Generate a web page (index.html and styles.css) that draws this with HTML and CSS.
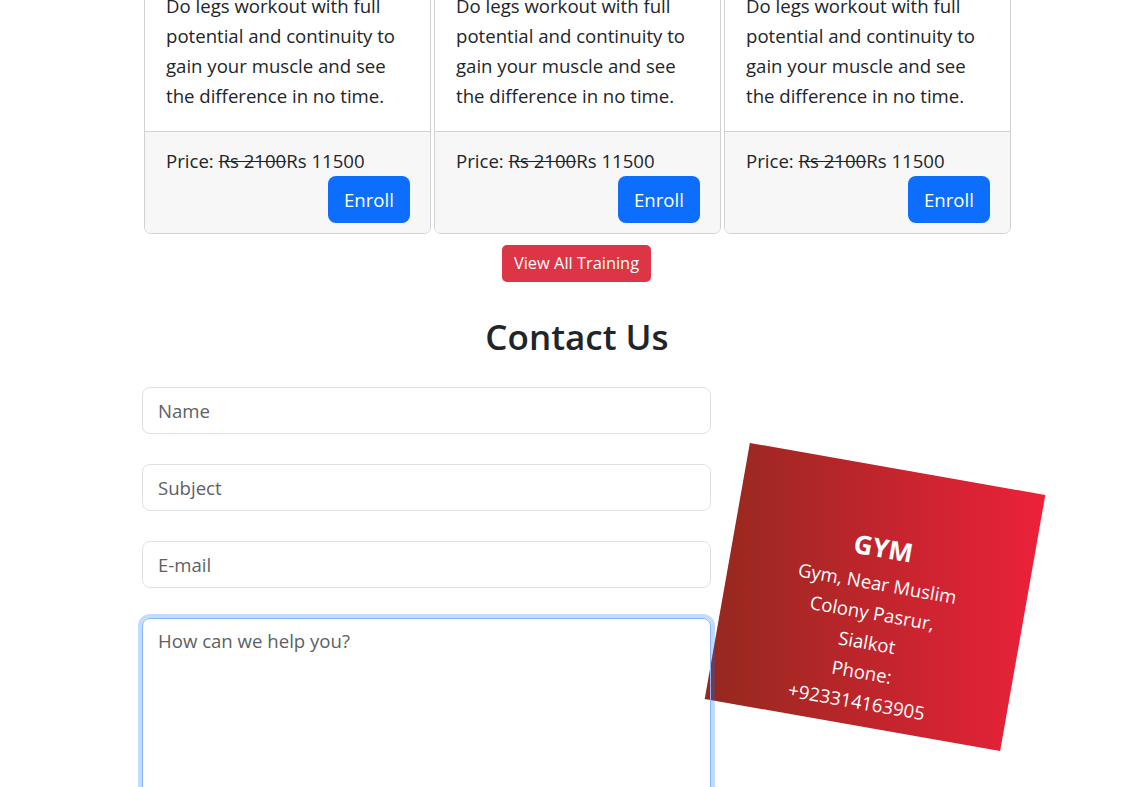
FILE: index.html
```html
<!DOCTYPE html>
<html lang="en">
<head>
<meta charset="utf-8">
<title>Gym</title>
<link rel="stylesheet" href="styles.css">
</head>
<body>
<main class="page">
  <section class="trainings">
    <div class="cards">
      <article class="card">
        <div class="card-body"><p>Do legs workout with full potential and continuity to gain your muscle and see the difference in no time.</p></div>
        <div class="card-footer">
          <div class="price">Price: <s>Rs 2100</s>Rs 11500</div>
          <div class="actions"><button class="btn-enroll">Enroll</button></div>
        </div>
      </article>
      <article class="card">
        <div class="card-body"><p>Do legs workout with full potential and continuity to gain your muscle and see the difference in no time.</p></div>
        <div class="card-footer">
          <div class="price">Price: <s>Rs 2100</s>Rs 11500</div>
          <div class="actions"><button class="btn-enroll">Enroll</button></div>
        </div>
      </article>
      <article class="card">
        <div class="card-body"><p>Do legs workout with full potential and continuity to gain your muscle and see the difference in no time.</p></div>
        <div class="card-footer">
          <div class="price">Price: <s>Rs 2100</s>Rs 11500</div>
          <div class="actions"><button class="btn-enroll">Enroll</button></div>
        </div>
      </article>
    </div>
    <div class="view-all"><button class="btn-red">View All Training</button></div>
  </section>

  <section class="contact">
    <h2 class="contact-title">Contact Us</h2>
    <div class="contact-row">
      <form class="contact-form">
        <input class="field" type="text" placeholder="Name">
        <input class="field" type="text" placeholder="Subject">
        <input class="field" type="email" placeholder="E-mail">
        <textarea class="field area focused" placeholder="How can we help you?"></textarea>
      </form>
      <div class="info-card">
        <h3 class="info-title">GYM</h3>
        <p class="info-text">Gym, Near Muslim Colony Pasrur, Sialkot<br>Phone: +923314163905</p>
      </div>
    </div>
  </section>
</main>
</body>
</html>
```

FILE: styles.css
```css
* { box-sizing: border-box; }
html, body { margin: 0; padding: 0; background: #fff; overflow: hidden; }
body {
  font-family: "Open Sans", "Noto Sans", sans-serif;
  color: #212529;
  height: 787px;
}
.page {
  width: 870px;
  margin-left: 142px;
}
.cards {
  display: flex;
  gap: 3px;
  margin-left: 2px;
  margin-top: -31px;
}
.card {
  width: 287px;
  border: 1px solid #d0d2d4;
  border-radius: 7px;
  overflow: hidden;
  background: #fff;
}
.card-body {
  padding: 21px 20px 20px 21px;
}
.card-body p {
  margin: 0;
  font-size: 18.6px;
  line-height: 30px;
  color: #212529;
}
.card-footer {
  background: #f7f7f7;
  border-top: 1px solid #d0d2d4;
  padding: 14px 20px 10px 21px;
}
.price {
  font-size: 18.6px;
  line-height: 30px;
}
.price s { text-decoration-thickness: 1px; }
.actions {
  display: flex;
  justify-content: flex-end;
}
.btn-enroll {
  font-family: inherit;
  font-size: 18.6px;
  line-height: 30px;
  color: #fff;
  background: #0d6efd;
  border: 0;
  border-radius: 8px;
  padding: 8px 16px;
  width: 82px;
  height: 47px;
}
.view-all {
  display: flex;
  justify-content: center;
  margin-top: 11px;
  padding-right: 1px;
}
.btn-red {
  font-family: inherit;
  font-size: 16.4px;
  line-height: 24px;
  color: #fff;
  background: #dc3545;
  border: 0;
  border-radius: 5px;
  padding: 6px 8px 7px;
  width: 149px;
}
.contact-title {
  margin: 31px 0 0;
  text-align: center;
  font-size: 35px;
  font-weight: 600;
  line-height: 48px;
  color: #212529;
}
.contact-row {
  display: flex;
  align-items: flex-start;
  margin-top: 26px;
}
.contact-form {
  width: 569px;
  display: flex;
  flex-direction: column;
  gap: 30px;
  flex-shrink: 0;
  position: relative;
  z-index: 1;
}
.field {
  display: block;
  width: 100%;
  height: 47px;
  font-family: inherit;
  font-size: 18.6px;
  line-height: 30px;
  padding: 7px 15px;
  border: 1px solid #dee2e6;
  border-radius: 8px;
  color: #212529;
  background: #fff;
  outline: none;
}
.field::placeholder { color: #5c6166; }
.area {
  height: 200px;
  resize: none;
  background: transparent;
}
.focused {
  border-color: #86b7fe;
  box-shadow: 0 0 0 4px rgba(13, 110, 253, 0.25);
}
.info-card {
  flex-shrink: 0;
  width: 300px;
  height: 260px;
  margin-left: 14px;
  margin-top: 80px;
  transform: rotate(10deg);
  background: linear-gradient(80deg, #93291e, #ed213a);
  color: #fff;
  text-align: center;
  padding: 62px 60px 0;
}
.info-title {
  margin: 0;
  font-size: 26px;
  font-weight: 700;
  line-height: 36px;
}
.info-text {
  margin: 3px 0 0;
  font-size: 18.6px;
  line-height: 30px;
}
```
